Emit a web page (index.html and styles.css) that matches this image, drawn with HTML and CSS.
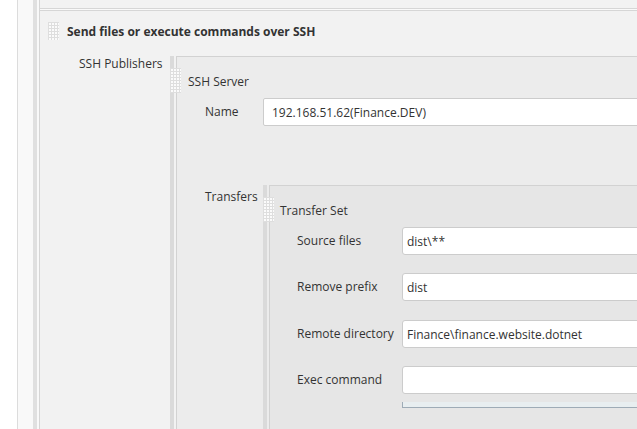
FILE: index.html
```html
<!DOCTYPE html>
<html lang="en">
<head>
<meta charset="utf-8">
<title>SSH Publishers</title>
<link rel="stylesheet" href="styles.css">
</head>
<body>
<div class="page">
  <div class="rail-outer">
    <div class="sections">
      <div class="prev-section"></div>
      <div class="section">
        <div class="section-head">
          <span class="grip grip-head"></span>
          <span class="section-title">Send files or execute commands over SSH</span>
        </div>
        <div class="row-publishers">
          <div class="label-publishers">SSH Publishers</div>
          <div class="chunk chunk-server">
            <span class="grip grip-chunk"></span>
            <div class="chunk-panel panel-server">
              <div class="chunk-title">SSH Server</div>
              <div class="field field-name">
                <label class="field-label label-server">Name</label>
                <input class="text-input input-name" type="text" value="192.168.51.62(Finance.DEV)">
              </div>
              <div class="field field-transfers">
                <div class="field-label label-server label-transfers">Transfers</div>
                <div class="chunk chunk-transfer">
                  <span class="grip grip-chunk"></span>
                  <div class="chunk-panel panel-transfer">
                    <div class="chunk-title">Transfer Set</div>
                    <div class="field field-first">
                      <label class="field-label label-transfer">Source files</label>
                      <input class="text-input input-transfer" type="text" value="dist\**">
                    </div>
                    <div class="field field-gap-a">
                      <label class="field-label label-transfer">Remove prefix</label>
                      <input class="text-input input-transfer" type="text" value="dist">
                    </div>
                    <div class="field field-gap-b">
                      <label class="field-label label-transfer">Remote directory</label>
                      <input class="text-input input-transfer" type="text" value="Finance\finance.website.dotnet">
                    </div>
                    <div class="field field-gap-a">
                      <label class="field-label label-transfer">Exec command</label>
                      <input class="text-input input-transfer" type="text" value="">
                    </div>
                    <div class="exec-strip"></div>
                  </div>
                </div>
              </div>
            </div>
          </div>
        </div>
      </div>
    </div>
  </div>
</div>
</body>
</html>
```
FILE: styles.css
```css
html, body {
  margin: 0;
  padding: 0;
}
body {
  background: #ffffff;
  font-family: "Open Sans", "Noto Sans", sans-serif;
  font-size: 12px;
  color: #333333;
  overflow: hidden;
}
.page {
  margin-left: 17px;
  width: 720px;
  height: 429px;
  border-left: 1px solid #dcdcdc;
  background: #f9f9f9;
  padding-left: 15px;
  overflow: hidden;
}
.rail-outer {
  height: 100%;
  border-left: 4px solid #e0e0e0;
  padding-left: 2px;
  display: flex;
  flex-direction: column;
}
.sections {
  flex: 1;
  border-left: 1px solid #d6d6d6;
  display: flex;
  flex-direction: column;
}
.prev-section {
  height: 8px;
  background: #f2f2f2;
  border-bottom: 1px solid #d6d6d6;
  margin-bottom: 1px;
}
.section {
  flex: 1;
  background: #f2f2f2;
  border-top: 1px solid #d6d6d6;
}
.grip {
  display: block;
  width: 11px;
  background-color: #fbfbfb;
  background-image:
    linear-gradient(to right, #dedede 1px, transparent 1px),
    linear-gradient(to bottom, #dedede 1px, transparent 1px);
  background-size: 3px 3px;
}
.section-head {
  display: flex;
  align-items: center;
  gap: 8px;
  padding: 11px 0 0 8px;
}
.grip-head {
  height: 18px;
}
.section-title {
  font-weight: bold;
  line-height: 14px;
  padding-top: 2px;
}
.row-publishers {
  display: flex;
  margin-top: 16px;
}
.label-publishers {
  width: 91px;
  padding-left: 39px;
  padding-top: 1px;
  line-height: 14px;
}
.chunk {
  position: relative;
  flex: 1;
  display: flex;
  border-left: 4px solid #dadada;
  padding-left: 2px;
}
.grip-chunk {
  position: absolute;
  left: -4px;
  top: 12px;
  height: 25px;
}
.chunk-panel {
  flex: 1;
  min-width: 0;
  border-left: 1px solid #d2d2d2;
  border-top: 1px solid #d2d2d2;
  padding-top: 16px;
}
.panel-server {
  background: #ececec;
  padding-left: 11px;
}
.panel-transfer {
  background: #e6e6e6;
  padding-left: 10px;
  padding-bottom: 120px;
}
.chunk-title {
  line-height: 14px;
  padding-top: 2px;
}
.field {
  display: flex;
  align-items: center;
  margin-left: 17px;
  margin-top: 9px;
}
.field-label {
  flex: none;
  line-height: 14px;
}
.label-server {
  width: 58px;
}
.label-transfer {
  width: 105px;
}
.field-transfers {
  margin-top: 59px;
  align-items: flex-start;
}
.label-transfers {
  padding-top: 5px;
}
.field-gap-a {
  margin-top: 18px;
}
.field-gap-b {
  margin-top: 19px;
}
.text-input {
  flex: 1;
  min-width: 0;
  height: 28px;
  box-sizing: border-box;
  border: 1px solid #cccccc;
  border-radius: 3px;
  background: #ffffff;
  font: inherit;
  color: #333333;
  margin: 0;
  outline: none;
}
.input-name {
  padding: 0 8px;
  border-radius: 2px;
}
.input-transfer {
  padding: 0 4px;
}
.exec-strip {
  margin-top: 8px;
  margin-left: 122px;
  height: 5px;
  background: #e8eef0;
  border-left: 1px solid #9eabb6;
  border-bottom: 1px solid #9eabb6;
}
```
